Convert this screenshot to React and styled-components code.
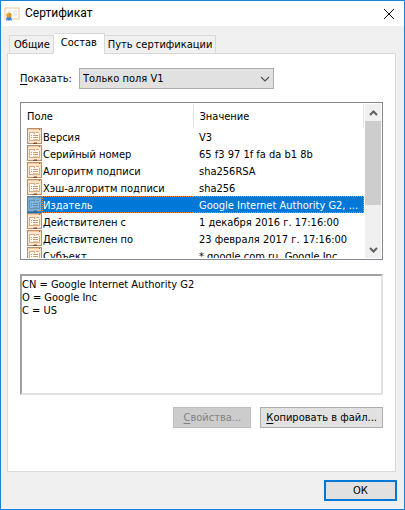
import React, { useState } from 'react';
import styled, { createGlobalStyle, css } from 'styled-components';

const FIELDS = [
  { name: 'Версия', value: 'V3' },
  { name: 'Серийный номер', value: '65 f3 97 1f fa da b1 8b' },
  { name: 'Алгоритм подписи', value: 'sha256RSA' },
  { name: 'Хэш-алгоритм подписи', value: 'sha256' },
  {
    name: 'Издатель',
    value: 'Google Internet Authority G2, ...',
    detail: 'CN = Google Internet Authority G2\nO = Google Inc\nC = US',
  },
  { name: 'Действителен с', value: '1 декабря 2016 г. 17:16:00' },
  { name: 'Действителен по', value: '23 февраля 2017 г. 17:16:00' },
  { name: 'Субъект', value: '*.google.com.ru, Google Inc' },
];

const TABS = ['Общие', 'Состав', 'Путь сертификации'];

const CertificateIcon = () => (
  <svg width="16" height="16" viewBox="0 0 16 16" aria-hidden="true">
    <rect x="1" y="2" width="14" height="11" fill="#fefcf8" stroke="#efd2a4" strokeWidth="1.2" />
    <path d="M4 5h4M9 5h4M9 7h4M9 9h4" stroke="#dde2ea" strokeWidth="1" />
    <path d="M3 10l-1 5 2-1 1 1 1-1 2 1-1-5z" fill="#3f83dc" />
    <circle cx="5" cy="9" r="2.6" fill="#d99a1c" />
    <circle cx="4" cy="8" r="1" fill="#f0bd45" />
  </svg>
);

const FieldIcon = () => (
  <svg width="15" height="17" viewBox="0 0 15 17" shapeRendering="crispEdges" aria-hidden="true">
    <path d="M0 0h15v16H0z" fill="#b98d68" />
    <path d="M1 1h13v14H1z" fill="#fde6cc" />
    <path d="M1 1h13v1H1z" fill="#fbc998" />
    <path d="M12 1h1v1h-1z" fill="#96684a" />
    <path d="M2 4h6v2h1V4h3v2h1v7H2z" fill="#d8ab82" />
    <path d="M3 6h9v6H3z" fill="#fffaf2" />
    <path d="M3 5h4v1H3zM9 5h3v1H9z" fill="#fffaf2" />
    <path d="M4 7h1v1H4zM6 7h5v1H6zM4 9h1v1H4zM6 9h5v1H6z" fill="#c69c76" />
    <path d="M6 11h5v1H6z" fill="#e2c3a3" />
    <path d="M6 15h4v1H6z" fill="#7d5138" />
    <path d="M7 14h3v1H7z" fill="#c69c76" />
  </svg>
);

const CloseIcon = () => (
  <svg width="12" height="12" viewBox="0 0 12 12" fill="none" aria-hidden="true">
    <path d="M1 1l10 10M11 1L1 11" stroke="#000" strokeWidth="1" />
  </svg>
);

const Arrow = ({ up }) => (
  <svg width="9" height="6" viewBox="0 0 9 6" fill="none" aria-hidden="true">
    <path d={up ? 'M1 5l3.5-3.5L8 5' : 'M1 1l3.5 3.5L8 1'} stroke="#606060" strokeWidth="2" />
  </svg>
);

const App = () => {
  const [tab, setTab] = useState('Состав');
  const [current, setCurrent] = useState(4);
  const field = FIELDS[current];

  return (
    <>
      <GlobalStyle />
      <Window>
        <TitleBar>
          <CertificateIcon />
          <Title>Сертификат</Title>
          <CloseButton type="button" aria-label="Закрыть">
            <CloseIcon />
          </CloseButton>
        </TitleBar>

        <Tabs role="tablist">
          {TABS.map(name => (
            <Tab
              key={name}
              type="button"
              role="tab"
              aria-selected={name === tab}
              $active={name === tab}
              onClick={() => setTab(name)}
            >
              {name}
            </Tab>
          ))}
        </Tabs>

        <Panel role="tabpanel">
          <FilterRow>
            <FilterLabel htmlFor="filter">
              <Key>П</Key>оказать:
            </FilterLabel>
            <SelectBox>
              <Select id="filter" defaultValue="v1">
                <option value="v1">Только поля V1</option>
              </Select>
              <SelectArrow width="10" height="6" viewBox="0 0 10 6" aria-hidden="true">
                <path d="M1 1l4 4 4-4" fill="none" stroke="#505050" strokeWidth="1.2" />
              </SelectArrow>
            </SelectBox>
          </FilterRow>

          <List>
            <ListView>
              <Table>
                <thead>
                  <tr>
                    <NameHeader>Поле</NameHeader>
                    <Header>Значение</Header>
                  </tr>
                </thead>
                <tbody>
                  {FIELDS.map((item, index) => (
                    <tr
                      key={item.name}
                      aria-selected={index === current}
                      onClick={() => setCurrent(index)}
                    >
                      <NameCell>
                        <NameContent>
                          <IconBox $selected={index === current}>
                            <FieldIcon />
                          </IconBox>
                          <Name $selected={index === current}>{item.name}</Name>
                        </NameContent>
                      </NameCell>
                      <Cell>
                        <Value $selected={index === current}>{item.value}</Value>
                      </Cell>
                    </tr>
                  ))}
                </tbody>
              </Table>
            </ListView>
            <ScrollBar>
              <ScrollButton type="button" aria-label="Вверх">
                <Arrow up />
              </ScrollButton>
              <Track>
                <Thumb />
              </Track>
              <ScrollButton type="button" aria-label="Вниз">
                <Arrow />
              </ScrollButton>
            </ScrollBar>
          </List>

          <Details readOnly aria-label="Значение поля" value={field.detail || field.value} />

          <Actions>
            <Button type="button" disabled>
              <Key>С</Key>войства...
            </Button>
            <Button type="button">
              <Key>К</Key>опировать в файл...
            </Button>
          </Actions>
        </Panel>

        <Footer>
          <OkButton type="button">ОК</OkButton>
        </Footer>
      </Window>
    </>
  );
};

export default App;

const GlobalStyle = createGlobalStyle`
  * {
    box-sizing: border-box;
  }

  body {
    margin: 0;
    color: #000;
    font-family: Tahoma, 'DejaVu Sans Condensed', sans-serif;
    font-size: 11px;
    line-height: 13px;
  }

  button,
  select,
  textarea {
    margin: 0;
    color: inherit;
    font: inherit;
  }
`;

const Window = styled.div`
  display: flex;
  flex-direction: column;
  min-height: 100vh;
  border: 1px solid #1883d7;
  background-color: #f0f0f0;
`;

const TitleBar = styled.header`
  display: flex;
  align-items: center;
  height: 25px;
  padding: 0 9px 0 3px;
  background-color: #fff;
`;

const Title = styled.h1`
  flex: 1;
  margin: 0 0 0 5px;
  font-family: 'Segoe UI', Roboto, sans-serif;
  font-size: 12px;
  font-weight: normal;
`;

const CloseButton = styled.button`
  display: flex;
  padding: 0;
  border: 0;
  background: none;
`;

const Tabs = styled.div`
  display: flex;
  align-items: flex-end;
  height: 27px;
  padding-left: 8px;
`;

const Tab = styled.button`
  height: 18px;
  padding: 0 3px;
  border: 1px solid #d9d9d9;
  border-bottom: 0;
  border-left-width: 0;
  background-color: #f0f0f0;
  white-space: nowrap;

  &:first-child {
    padding-left: 4px;
    border-left-width: 1px;
  }

  ${props =>
    props.$active &&
    css`
      z-index: 1;
      height: 21px;
      margin-bottom: -1px;
      padding: 0 7px 3px;
      background-color: #fff;
    `}
`;

const Panel = styled.section`
  display: flex;
  flex: 1;
  flex-direction: column;
  margin: 0 8px 0 6px;
  padding: 14px 12px 24px;
  border: 1px solid #d9d9d9;
  background-color: #fff;
`;

const FilterRow = styled.div`
  display: flex;
  align-items: center;
`;

const FilterLabel = styled.label`
  width: 59px;
`;

const Key = styled.span`
  text-decoration: underline;
  text-underline-offset: 2px;
`;

const SelectBox = styled.div`
  display: grid;
  flex: 0 1 195px;
  align-items: center;
`;

const Select = styled.select`
  grid-area: 1 / 1;
  height: 21px;
  padding: 0 20px 0 3px;
  border: 1px solid #adadad;
  border-radius: 0;
  background-color: #e1e1e1;
  appearance: none;
`;

const SelectArrow = styled.svg`
  grid-area: 1 / 1;
  justify-self: end;
  margin-right: 4px;
  pointer-events: none;
`;

const List = styled.div`
  display: flex;
  height: 158px;
  margin-top: 13px;
  padding: 1px;
  border: 1px solid #828790;
`;

const ListView = styled.div`
  flex: 1;
  min-width: 0;
  overflow: hidden;
`;

const Table = styled.table`
  width: 100%;
  border-collapse: collapse;
  table-layout: fixed;
`;

const Header = styled.th`
  height: 24px;
  padding: 0 6px;
  border-right: 1px solid #e5e5e5;
  font-weight: normal;
  text-align: left;
`;

const NameHeader = styled(Header)`
  width: 171px;
  padding-left: 5px;
`;

const Cell = styled.td`
  height: 17px;
  padding: 0;
  white-space: nowrap;
`;

const NameCell = styled(Cell)`
  padding-left: 5px;
`;

const NameContent = styled.div`
  display: flex;
  height: 17px;
`;

const IconBox = styled.span`
  display: flex;
  background-color: ${props => (props.$selected ? '#0078d7' : '#fff')};

  svg {
    opacity: ${props => (props.$selected ? 0.5 : 1)};
  }
`;

const Text = styled.div`
  height: 17px;
  padding: 2px 0 0;
  border: 1px solid transparent;
  ${props =>
    props.$selected &&
    css`
      border: 1px dotted #ff8728;
      background-color: #0078d7;
      color: #fff;
    `}
`;

const Name = styled(Text)`
  flex: 1;
  border-right: 0;
`;

const Value = styled(Text)`
  padding: 2px 5px 0 6px;
  border-left: 0;
`;

const ScrollBar = styled.div`
  display: flex;
  flex-direction: column;
  width: 17px;
  border-left: 1px solid #fff;
  background-color: #f0f0f0;
`;

const ScrollButton = styled.button`
  display: flex;
  align-items: center;
  justify-content: center;
  height: 17px;
  padding: 0;
  border: 0;
  background: none;
`;

const Track = styled.div`
  flex: 1;
`;

const Thumb = styled.div`
  height: 84px;
  background-color: #cdcdcd;
`;

const Details = styled.textarea`
  height: 121px;
  margin-top: 14px;
  padding: 2px 0 0;
  border: 2px solid;
  border-color: #a0a0a0 #e3e3e3 #e3e3e3 #a0a0a0;
  outline: 0;
  resize: none;
`;

const Actions = styled.div`
  display: flex;
  justify-content: flex-end;
  gap: 9px;
  margin-top: 12px;
`;

const Button = styled.button`
  height: 21px;
  min-width: 78px;
  padding: 0 5px;
  border: 1px solid #adadad;
  background-color: #e1e1e1;

  &:disabled {
    border-color: #bfbfbf;
    background-color: #ccc;
    color: #838383;
  }
`;

const Footer = styled.footer`
  display: flex;
  justify-content: flex-end;
  padding: 8px 7px;
`;

const OkButton = styled(Button)`
  min-width: 73px;
  border: 2px solid #0078d7;
`;
